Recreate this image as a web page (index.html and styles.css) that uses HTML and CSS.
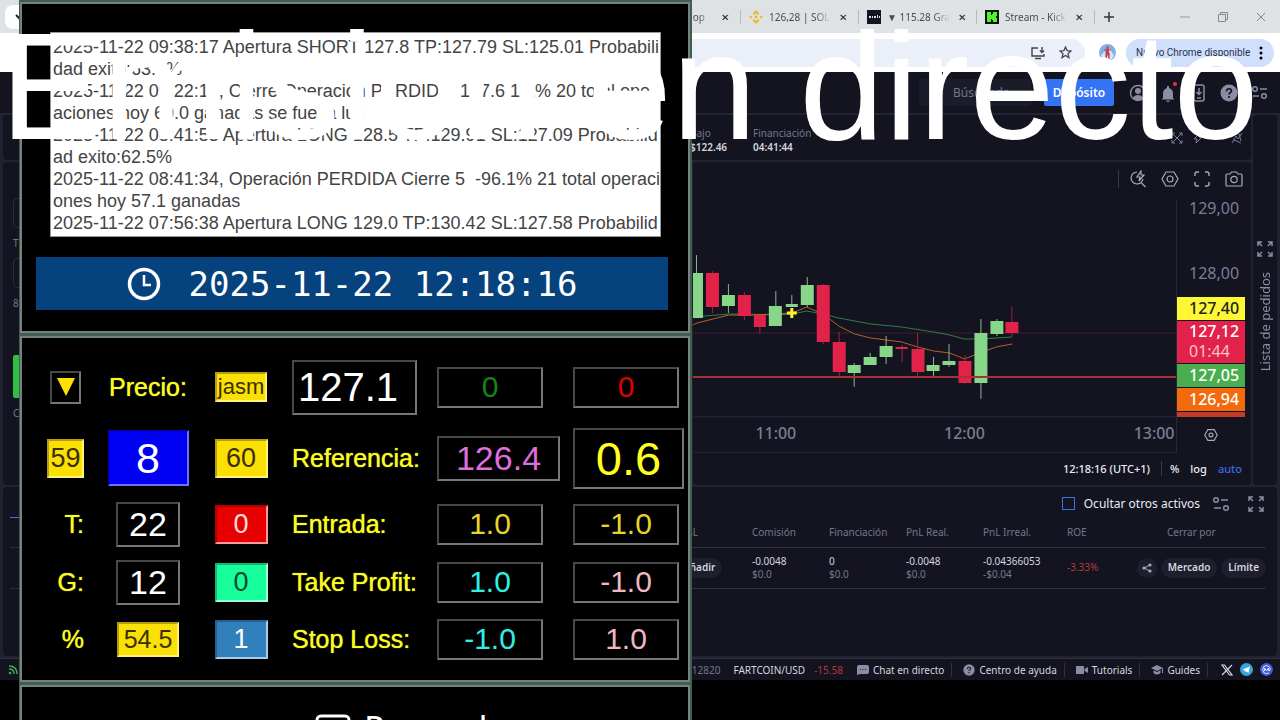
FILE: index.html
```
<!DOCTYPE html>
<html lang="es">
<head>
    <meta charset="UTF-8">
    <meta name="viewport" content="width=device-width, initial-scale=1.0">
    <title>Emision en directo</title>
    <link rel="stylesheet" href="styles.css">
</head>
<body>

    <!-- Navegador -->
    <div class="browser">
        <div class="tab-strip">
            <button class="tab-search" title="Buscar pestañas"><svg width="10" height="10" viewBox="0 0 10 10"><path d="M2 3l3 3 3-3" fill="none" stroke="#222" stroke-width="2"/></svg></button>
            <div class="tab">
                <span class="favicon"></span>
                <span class="tab-title tab-title-end">e op</span>
                <button class="tab-close">✕</button>
            </div>
            <div class="tab">
                <svg class="favicon" viewBox="0 0 14 14"><path d="M7 0l3.500 3.500-1.600 1.600L7 3.200 5.100 5.100 3.500 3.500zM0 7l1.700-1.700L3.400 7 1.700 8.700zM14 7l-1.700-1.700L10.600 7l1.700 1.700zM7 5.200L8.800 7 7 8.800 5.200 7zM7 14l-3.500-3.500 1.600-1.600L7 10.800l1.900-1.900 1.600 1.600z" fill="#f0b92b"/></svg>
                <span class="tab-title">126,28 | SOL</span>
                <button class="tab-close">✕</button>
            </div>
            <div class="tab">
                <svg class="favicon" viewBox="0 0 14 14"><path d="M0 0h14v14H0z" fill="#111626"/><path d="M2 6h2v2H2zM5 6h1v2H5zM7 6h2v2H7zM10 5h1v3h-1zM12 6h1v2h-1z" fill="#ddd"/></svg>
                <span class="tab-title">▼ 115.28 Gra</span>
                <button class="tab-close">✕</button>
            </div>
            <div class="tab">
                <svg class="favicon" viewBox="0 0 14 14"><path d="M0 0h14v14H0z" fill="#06140a"/><path d="M2 2h4v3h1V4h1V2h4v4h-1v2h1v4H8v-2H7V9H6v3H2z" fill="#4ff52a"/></svg>
                <span class="tab-title">Stream - Kick</span>
                <button class="tab-close">✕</button>
            </div>
            <div class="window-buttons">
                <button class="new-tab" title="Nueva pestaña"><svg width="10" height="10" viewBox="0 0 10 10"><path d="M5 0v10M0 5h10" stroke="#333" stroke-width="1.500"/></svg></button>
                <button title="Minimizar"><svg width="10" height="10" viewBox="0 0 10 10"><path d="M0 5h10" stroke="#999"/></svg></button>
                <button title="Restaurar"><svg width="10" height="10" viewBox="0 0 10 10"><path d="M.5 2.500h7v7h-7zM2.500 2.500V.500h7v7h-2" fill="none" stroke="#888"/></svg></button>
                <button title="Cerrar"><svg width="10" height="10" viewBox="0 0 10 10"><path d="M1 1l8 8M9 1L1 9" stroke="#888"/></svg></button>
            </div>
        </div>
        <div class="toolbar">
            <div class="omnibox">
                <svg width="14" height="14" viewBox="0 0 14 14"><path d="M7 2H1v8h12V8M4 12.500h6M11 1v5M9 4.500l2 2 2-2" fill="none" stroke="#444" stroke-width="1.400"/></svg>
                <svg width="13" height="13" viewBox="0 0 14 14"><path d="M7 1l1.700 4 4.300.400-3.300 2.800 1 4.300L7 10.200l-3.700 2.300 1-4.300L1 5.400 5.300 5z" fill="none" stroke="#444" stroke-width="1.400"/></svg>
            </div>
            <svg class="avatar" viewBox="0 0 16 16"><circle cx="8" cy="8" r="8" fill="#86aee6"/><path d="M2 11l3-4 2 2 3-5 4 7-2 3H4z" fill="#d9e6f8"/><path d="M7 2h2v3h2v1H9l1 3v5H9l-1-4-1 4H6V9l1-3H5V5h2z" fill="#c2404c"/></svg>
            <button class="update-pill">Nuevo Chrome disponible <svg width="4" height="14" viewBox="0 0 4 14"><circle cx="2" cy="2" r="1.500"/><circle cx="2" cy="7" r="1.500"/><circle cx="2" cy="12" r="1.500"/></svg></button>
        </div>

        <!-- Plataforma de trading -->
        <div class="app-header">
            <input class="search" type="text" placeholder="Búsqueda" aria-label="Búsqueda">
            <button class="deposit">Depósito</button>
            <div class="header-icons">
                <svg width="18" height="18" viewBox="0 0 18 18"><circle cx="9" cy="9" r="7.500" fill="none" stroke="#8a8da3" stroke-width="1.500"/><circle cx="9" cy="7" r="3" fill="#8a8da3"/><path d="M4 14c1-4 9-4 10 0-3 3-7 3-10 0z" fill="#8a8da3"/></svg>
                <svg width="18" height="22" viewBox="0 0 18 22"><path d="M7 4h2v2c3 1 4 3 4 6v4l1.500 1.500h-13L3 16v-4c0-3 1-5 4-6zM6 18.500h4l-2 2z" fill="#8a8da3"/><circle cx="15" cy="2" r="2" fill="#e5343c"/></svg>
                <svg width="16" height="18" viewBox="0 0 16 18"><rect x="3" y="1" width="10" height="16" rx="2" fill="none" stroke="#8a8da3" stroke-width="1.500"/><path d="M8 4v6M5.500 8L8 10.500 10.500 8M6 14h4" fill="none" stroke="#8a8da3" stroke-width="1.500"/></svg>
                <svg width="18" height="18" viewBox="0 0 18 18"><circle cx="9" cy="9" r="8.500" fill="#8a8da3"/><path d="M6.500 7.500c0-4 5-3 5-.500 0 1.500-2.500 1.500-2.500 3.500M9 12v2" fill="none" stroke="#131420" stroke-width="1.600"/></svg>
                <svg width="18" height="16" viewBox="0 0 18 16"><circle cx="4" cy="4" r="2.300" fill="none" stroke="#8a8da3" stroke-width="1.500"/><circle cx="13" cy="11" r="2.300" fill="none" stroke="#8a8da3" stroke-width="1.500"/><path d="M9 4h7M2 11h6" stroke="#8a8da3" stroke-width="1.500"/></svg>
            </div>
        </div>

        <div class="workspace">
            <div class="card market-info">
                <dl class="stat stat-low"><dt>Bajo</dt><dd>$122.46</dd></dl>
                <dl class="stat"><dt>Financiación</dt><dd>04:41:44</dd></dl>
                <div class="info-icons">
                    <svg width="12" height="12" viewBox="0 0 12 12"><path d="M1 4V1h3M8 1h3v3M11 8v3H8M4 11H1V8M1 1l10 10M11 1L1 11" fill="none" stroke="#7b7e92"/></svg>
                    <svg width="12" height="12" viewBox="0 0 12 12"><path d="M8 1L2 7h3l-1 4 6-6H7z" fill="none" stroke="#7b7e92"/></svg>
                    <svg class="pin" width="12" height="12" viewBox="0 0 12 12"><path d="M1 11l4-7 2 3 4-6M3 8l7 3M8 2l2 7" fill="none" stroke="#7b7e92"/></svg>
                </div>
            </div>

            <div class="card side-rail">
                <svg width="16" height="16" viewBox="0 0 16 16"><path d="M1 5V1h4M1 1l4 4M11 1h4v4M15 1l-4 4M15 11v4h-4M15 15l-4-4M5 15H1v-4M1 15l4-4" fill="none" stroke="#8a8da3" stroke-width="1.500"/></svg>
                <span>Lista de pedidos</span>
            </div>

            <div class="card order-form">
                <div class="order-field"></div>
                <span>T</span>
                <div class="order-field"></div>
                <span>8</span>
                <button class="buy" aria-label="Comprar"></button>
                <span>C</span>
            </div>

            <div class="card chart">
                <div class="chart-tools">
                    <svg class="replay" width="18" height="18" viewBox="0 0 18 18"><path d="M8 2a6 6 0 1 0 6 7M12.500 13l4 4M12 1L8 7h3l-1 4 5-6h-3z" fill="none" stroke="#a9abba" stroke-width="1.200"/></svg>
                    <svg width="18" height="18" viewBox="0 0 18 18"><path d="M5 2h8l4 7-4 7H5L1 9z" fill="none" stroke="#a9abba" stroke-width="1.200"/><circle cx="9" cy="9" r="3" fill="none" stroke="#a9abba" stroke-width="1.200"/></svg>
                    <svg width="18" height="18" viewBox="0 0 18 18"><path d="M2 6V4q0-2 2-2h2M12 2h2q2 0 2 2v2M16 12v2q0 2-2 2h-2M6 16H4q-2 0-2-2v-2" fill="none" stroke="#a9abba" stroke-width="1.400"/></svg>
                    <svg width="18" height="18" viewBox="0 0 18 18"><path d="M2 4h3l1.500-2h5L13 4h3q1 0 1 1v10q0 1-1 1H2q-1 0-1-1V5q0-1 1-1z" fill="none" stroke="#a9abba" stroke-width="1.200"/><circle cx="9" cy="9.500" r="3.200" fill="none" stroke="#a9abba" stroke-width="1.200"/></svg>
                </div>
                <div class="plot-row">
                    <svg class="plot" viewBox="0 0 485 258">
                        <path class="grid-line" d="M0 222h485M0 257.500h485M484.500 5v253"/>
                        <path class="last-price" d="M0 138h484"/>
                        <path class="ma-slow" d="M0 122l36-3h16l31 1 16-1 15-3 16 3 16 4 16 3 16 3 31 3 32 5 16 3 15 4h18l30-2"/>
                        <path class="ma-fast" d="M0 130l4-2 16-4 16-4h24l39-2 15-6 16 7 7 5 9 7 16 8 16 4 31 4 16 5 16 4 16 2 15 6 18-7 14-5 16-3"/>
                        <path class="wick up" d="M3.500 60v60M35.500 89v29M83 96v20M99 100v10M114.500 82v30M161.500 168v24M177.500 158v8M193.500 141v28M241 162v19M256.500 149v23M288.500 124v80M304.500 124v17"/>
                        <path class="wick down" d="M19.500 76v42M51.500 97v28M67 120v19M130.500 89v60M146.500 137v44M209.500 150v17M225 138v43M272.500 160v29M319.500 112v29"/>
                        <path class="body up" d="M-3 78h13v45h-13zM29 100h13v11h-13zM76 111h13v20h-13zM93 109h12v3h-12zM108 90h13v20h-13zM155 170h13v8h-13zM171 162h13v8h-13zM187 151h13v11h-13zM234 170h13v6h-13zM250 166h13v4h-13zM282 138h13v50h-13zM298 126h13v13h-13z"/>
                        <path class="body down" d="M13 78h13v34h-13zM45 100h13v21h-13zM61 120h12v12h-12zM124 90h13v57h-13zM140 147h13v30h-13zM203 152h12v2h-12zM219 154h13v23h-13zM266 166h13v22h-13zM313 127h13v11h-13z"/>
                        <path class="entry-line" d="M0 182h484"/>
                        <path class="marker" d="M99 113v10M94 118h10"/>
                        <text x="83" y="244">11:00</text>
                        <text x="272" y="244">12:00</text>
                        <text x="462" y="244">13:00</text>
                    </svg>
                    <div class="price-axis">
                        <div class="prices">
                            <span class="tick">129,00</span>
                            <span class="tick">128,00</span>
                            <span class="tag tag-yellow">127,40</span>
                            <span class="tag tag-red">127,12<br><small>01:44</small></span>
                            <span class="tag tag-green">127,05</span>
                            <span class="tag tag-orange">126,94</span>
                            <span class="tag tag-brick">126,49</span>
                        </div>
                        <svg width="14" height="14" viewBox="0 0 18 18"><path d="M5 2h8l4 7-4 7H5L1 9z" fill="none" stroke="#a9abba" stroke-width="1.500"/><circle cx="9" cy="9" r="2.500" fill="none" stroke="#a9abba" stroke-width="1.500"/></svg>
                    </div>
                </div>
                <div class="chart-footer">
                    <span>12:18:16 (UTC+1)</span>
                    <button class="percent">%</button>
                    <button>log</button>
                    <button class="auto">auto</button>
                </div>
            </div>

            <div class="card positions">
                <div class="positions-bar">
                    <button class="positions-tab" aria-label="Posiciones"></button>
                    <input type="checkbox" id="hide-assets">
                    <label for="hide-assets">Ocultar otros activos</label>
                    <svg width="18" height="16" viewBox="0 0 18 16"><circle cx="4" cy="4" r="2.300" fill="none" stroke="#8a8da3" stroke-width="1.500"/><circle cx="14" cy="12" r="2.300" fill="none" stroke="#8a8da3" stroke-width="1.500"/><path d="M9 4h7M2 12h7" stroke="#8a8da3" stroke-width="1.500"/></svg>
                    <svg width="16" height="16" viewBox="0 0 16 16"><path d="M1 5V1h4M1 1l4 4M11 1h4v4M15 1l-4 4M15 11v4h-4M15 15l-4-4M5 15H1v-4M1 15l4-4" fill="none" stroke="#8a8da3" stroke-width="1.500"/></svg>
                </div>
                <table>
                    <colgroup>
                        <col><col class="w-80"><col class="w-77"><col class="w-77"><col class="w-77"><col class="w-84"><col class="w-70"><col class="w-129">
                    </colgroup>
                    <thead>
                        <tr><th></th><th>TP/SL</th><th>Comisión</th><th>Financiación</th><th>PnL Real.</th><th>PnL Irreal.</th><th>ROE</th><th class="close-by">Cerrar por</th></tr>
                    </thead>
                    <tbody>
                        <tr>
                            <td></td>
                            <td class="targets"><button class="pill">Añadir</button></td>
                            <td>-0.0048<small>$0.0</small></td>
                            <td>0<small>$0.0</small></td>
                            <td>-0.0048<small>$0.0</small></td>
                            <td>-0.04366053<small>-$0.04</small></td>
                            <td class="loss">-3.33%</td>
                            <td>
                                <div class="close-actions">
                                    <button class="pill share" title="Compartir"><svg width="10" height="10" viewBox="0 0 10 10"><path d="M8 2L2 5l6 3" fill="none" stroke="#a9abba"/><circle cx="8" cy="2" r="1.600" fill="#a9abba"/><circle cx="2" cy="5" r="1.600" fill="#a9abba"/><circle cx="8" cy="8" r="1.600" fill="#a9abba"/></svg></button>
                                    <button class="pill">Mercado</button>
                                    <button class="pill">Límite</button>
                                </div>
                            </td>
                        </tr>
                    </tbody>
                </table>
            </div>
        </div>

        <div class="app-footer">
            <svg class="signal" width="10" height="10" viewBox="0 0 10 10"><path d="M1 1q8 0 8 8M1 4q5 0 5 5" fill="none" stroke="#3fae4a" stroke-width="1.500"/><circle cx="2" cy="8" r="1.300" fill="#3fae4a"/></svg>
            <span class="ticker-price">.12820</span>
            <span class="ticker-name">FARTCOIN/USD</span>
            <span class="ticker-change">-15.58</span>
            <a href="#"><svg width="12" height="10" viewBox="0 0 12 10"><path d="M2 0h8q2 0 2 2v5q0 2-2 2H3l-3 1V2q0-2 2-2z" fill="#8a8da3"/><path d="M3 4h1v1H3zM5.500 4h1v1h-1zM8 4h1v1H8z" fill="#131420"/></svg>Chat en directo</a>
            <a href="#"><svg width="12" height="12" viewBox="0 0 18 18"><circle cx="9" cy="9" r="8.500" fill="#8a8da3"/><path d="M6.500 7.500c0-4 5-3 5-.500 0 1.500-2.500 1.500-2.500 3.500M9 12v2" fill="none" stroke="#131420" stroke-width="1.600"/></svg>Centro de ayuda</a>
            <a href="#"><svg width="12" height="10" viewBox="0 0 12 10"><path d="M0 1h8v8H0zM8.500 4L12 2v6L8.500 6z" fill="#8a8da3"/></svg>Tutorials</a>
            <a href="#"><svg width="12" height="10" viewBox="0 0 12 10"><path d="M6 0l6 3-6 3-6-3zM2.500 5.200L6 7l3.500-1.800V8Q6 11 2.500 8zM11 3.500h1V8h-1z" fill="#8a8da3"/></svg>Guides</a>
            <div class="social">
                <a href="#" title="X"><svg width="12" height="12" viewBox="0 0 12 12"><path d="M1 1h2.500l7.500 10H8.500zM11 1L1 11" fill="none" stroke="#d5d6df" stroke-width="1.200"/></svg></a>
                <a href="#" title="Telegram"><svg width="13" height="13" viewBox="0 0 13 13"><circle cx="6.500" cy="6.500" r="6.500" fill="#35a5dc"/><path d="M2.500 6.500L10 3.500 8.500 10 5.800 8l-.800 1.500-.500-2.300z" fill="#fff"/></svg></a>
                <a href="#" title="CoinMarketCap"><svg width="13" height="13" viewBox="0 0 13 13"><circle cx="6.500" cy="6.500" r="6.500" fill="#4358d8"/><path d="M9 10Q6 11.500 3.700 9.500 1.500 6 4 3.300 7 1.500 9.500 4q1 2 .500 3.500-1.200 1-1.500-.500V5L6.500 8 4.500 5v3" fill="none" stroke="#dfe4ff"/></svg></a>
            </div>
        </div>
    </div>

    <!-- Ventana del bot, por encima del navegador -->
    <div class="bot">
        <div class="frame frame-log">
            <textarea class="log" readonly wrap="off" aria-label="Registro de operaciones">2025-11-22 09:38:17 Apertura SHORT 127.8 TP:127.79 SL:125.01 Probabili
dad exito:63.6%
2025-11-22 09:22:17, Cierre Operación PERDIDA  127.6 1.1% 20 total oper
aciones hoy 60.0 ganadas se fue la luz
2025-11-22 08:41:53 Apertura LONG 128.5 TP:129.91 SL:127.09 Probabilid
ad exito:62.5%
2025-11-22 08:41:34, Operación PERDIDA Cierre 5  -96.1% 21 total operaci
ones hoy 57.1 ganadas
2025-11-22 07:56:38 Apertura LONG 129.0 TP:130.42 SL:127.58 Probabilid</textarea>
            <div class="clock">
                <svg width="34" height="34" viewBox="0 0 34 34"><circle cx="17" cy="17" r="14.500" fill="none" stroke="#fff" stroke-width="3.500"/><path d="M17 8v10h7" fill="none" stroke="#fff" stroke-width="2.500"/></svg>
                <time>2025-11-22 12:18:16</time>
            </div>
        </div>

        <div class="frame controls">
            <button class="box arrow" title="Bajista"><svg width="18" height="18" viewBox="0 0 18 18"><path d="M0 0h18L9 18z" fill="#ffe000"/></svg></button>
            <label for="price">Precio:</label>
            <input class="box gold user" type="text" value="jasm" aria-label="Usuario">
            <div class="cell"><input class="box price" id="price" type="text" value="127.1"></div>
            <input class="box value green" type="text" value="0" aria-label="Compras">
            <input class="box value red" type="text" value="0" aria-label="Ventas">

            <input class="box gold sec" type="text" value="59" aria-label="Segundos">
            <input class="box blue" type="text" value="8" aria-label="Operación">
            <input class="box gold small" type="text" value="60" aria-label="Intervalo">
            <label class="cell" for="reference">Referencia:</label>
            <input class="box reference" id="reference" type="text" value="126.4">
            <input class="box diff" type="text" value="0.6" aria-label="Diferencia">

            <label for="total">T:</label>
            <input class="box count" id="total" type="text" value="22">
            <input class="box small bg-red" type="text" value="0" aria-label="Perdidas seguidas">
            <label class="cell" for="entry">Entrada:</label>
            <input class="box value amber" id="entry" type="text" value="1.0">
            <input class="box value amber" type="text" value="-1.0" aria-label="Entrada corta">

            <label for="won">G:</label>
            <input class="box count" id="won" type="text" value="12">
            <input class="box small bg-mint" type="text" value="0" aria-label="Ganadas seguidas">
            <label class="cell" for="take-profit">Take Profit:</label>
            <input class="box value cyan" id="take-profit" type="text" value="1.0">
            <input class="box value pink" type="text" value="-1.0" aria-label="Take Profit corto">

            <label for="percent">%</label>
            <input class="box gold ratio" id="percent" type="text" value="54.5">
            <input class="box small bg-steel" type="text" value="1" aria-label="Activo">
            <label class="cell" for="stop-loss">Stop Loss:</label>
            <input class="box value cyan" id="stop-loss" type="text" value="-1.0">
            <input class="box value pink" type="text" value="1.0" aria-label="Stop Loss corto">
        </div>

        <div class="frame frame-next">
            <svg width="36" height="30" viewBox="0 0 36 30"><rect x="2" y="2" width="32" height="26" rx="4" fill="none" stroke="#fff" stroke-width="3"/></svg>
            <span>Record</span>
        </div>
    </div>

    <!-- Rótulo de la emisión -->
    <div class="live-title">Emision en directo</div>

</body>
</html>
```
FILE: styles.css
```
* {
    box-sizing: border-box;
}

body {
    margin: 0;
    height: 100vh;
    overflow: hidden; /* sin barras de desplazamiento */
    position: relative;
    background-color: #000;
    color: #d5d6df;
    font-family: "Noto Sans", "Open Sans", sans-serif;
    font-size: 11px;
}

button {
    padding: 0;
    border: none;
    background: none;
    color: inherit;
    font: inherit;
    cursor: pointer;
}

svg {
    flex-shrink: 0;
}

/* Pestañas */
.tab-strip {
    display: flex;
    justify-content: flex-end;
    align-items: center;
    height: 33px;
    background-color: #dee2e5;
    color: #4a4c50;
    font-size: 10px;
}

.tab-search {
    display: flex;
    justify-content: center;
    align-items: center;
    width: 28px;
    height: 24px;
    margin: 0 auto 0 5px;
    border-radius: 8px;
    background-color: #fff;
}

.tab {
    display: flex;
    align-items: center;
    gap: 6px;
    width: 118px;
    height: 14px;
    padding: 0 9px 0 8px;
    border-right: 1px solid #b5b8bc;
}

.favicon {
    flex-shrink: 0;
    width: 14px;
    height: 14px;
}

.tab-title {
    flex: 1;
    white-space: nowrap;
    -webkit-mask-image: linear-gradient(to right, #000 75%, transparent);
    mask-image: linear-gradient(to right, #000 75%, transparent);
}

.tab-title-end {
    text-align: right;
    padding-right: 8px;
}

.tab-close {
    width: 12px;
    color: #222;
}

.window-buttons {
    display: flex;
    align-items: center;
    gap: 28px;
    width: 185px;
    padding: 0 14px 0 9px;
}

.window-buttons button {
    display: flex;
}

.window-buttons .new-tab {
    margin-right: auto;
}

.toolbar {
    display: flex;
    align-items: center;
    justify-content: flex-end;
    height: 39px;
    padding: 0 6px;
    background-color: #fff;
}

.omnibox {
    display: flex;
    justify-content: flex-end;
    align-items: center;
    gap: 14px;
    flex: 1;
    height: 28px;
    margin-left: 80px;
    padding-right: 13px;
    border-radius: 14px;
    background-color: #ebeffa;
}

.avatar {
    width: 17px;
    height: 17px;
    margin: 0 10px 0 14px;
}

.update-pill {
    display: flex;
    justify-content: space-between;
    align-items: center;
    width: 148px;
    height: 28px;
    padding: 0 11px 0 10px;
    border-radius: 14px;
    background-color: #d0dffb;
    color: #26324c;
    font-family: Roboto, sans-serif;
    font-size: 10px;
}

/* Cabecera de la plataforma */
.app-header {
    display: flex;
    justify-content: flex-end;
    align-items: center;
    gap: 13px;
    height: 43px;
    padding-right: 11px;
    border-bottom: 2px solid #232534;
    background-color: #131420;
}

.search {
    width: 112px;
    height: 27px;
    padding: 0 0 0 34px;
    border: none;
    border-radius: 3px;
    background-color: #1a1c29;
    font: inherit;
    font-size: 12px;
}

.search::placeholder {
    color: #74778c;
}

.deposit {
    width: 70px;
    height: 27px;
    border-radius: 2px;
    background-color: #3573f5;
    color: #fff;
    font-size: 12px;
    font-weight: 600;
}

.header-icons {
    display: flex;
    align-items: center;
    gap: 13px;
    margin-left: 2px;
}

/* Rejilla de tarjetas */
.workspace {
    display: grid;
    grid-template-columns: 54% 1fr 24px;
    grid-template-rows: 45px 323px 169px;
    gap: 2px;
    padding: 0 3px 2px;
    background-color: #20222f;
}

.card {
    border-radius: 4px;
    background-color: #131420;
    overflow: hidden;
}

.market-info {
    grid-column: 1 / 3;
    display: flex;
    justify-content: flex-end;
    padding: 11px 6px 0 0;
}

.stat {
    width: 210px;
    margin: 0;
    font-size: 10px;
    line-height: 14px;
}

.stat-low {
    width: 63px;
}

.stat dt {
    color: #74778c;
}

.stat dd {
    margin: 0;
    font-weight: 600;
}

.info-icons {
    display: flex;
    gap: 9px;
    width: 282px;
    padding: 6px 2px 0 0;
    justify-content: flex-end;
}

.pin {
    margin-left: 18px;
}

.side-rail {
    grid-column: 3;
    grid-row: 1 / 3;
    display: flex;
    flex-direction: column;
    align-items: center;
    gap: 15px;
    padding-top: 126px;
    color: #8a8da3;
    font-size: 13px;
}

.side-rail span {
    writing-mode: vertical-rl;
    transform: rotate(180deg);
}

.order-form {
    grid-column: 1;
    display: flex;
    flex-direction: column;
    padding: 36px 10px 0;
    color: #74778c;
    font-size: 10px;
    line-height: 14px;
}

.order-form span {
    padding: 8px 0;
}

.order-field {
    flex-shrink: 0;
    height: 30px;
    border: 1px solid #2b2d3b;
    border-radius: 4px;
}

.buy {
    flex-shrink: 0;
    height: 43px;
    margin-top: 37px;
    border-radius: 2px;
    background-color: #2fbf45;
}

/* Gráfico */
.chart {
    grid-column: 2;
    display: flex;
    flex-direction: column;
}

.chart-tools {
    display: flex;
    justify-content: flex-end;
    align-items: center;
    gap: 14px;
    height: 33px;
    padding-right: 8px;
}

.replay {
    width: 29px;
    padding-left: 10px;
    border-left: 1px solid #383a49;
}

.plot-row {
    display: flex;
    height: 258px;
}

.plot {
    flex: 1;
    min-width: 0;
    height: 258px;
    font-size: 16px;
    font-weight: 500;
    text-anchor: middle;
    fill: #7b7e92;
}

.plot path {
    fill: none;
}

.plot .grid-line {
    stroke: #272937;
}

.plot .last-price {
    stroke: #6b2540;
    stroke-dasharray: 1 1;
}

.plot .entry-line {
    stroke: #a43236;
    stroke-width: 2;
}

.plot .ma-slow {
    stroke: #347a48;
}

.plot .ma-fast {
    stroke: #b4612a;
}

.plot .wick.up {
    stroke: #8fb594;
}

.plot .wick.down {
    stroke: #a32042;
}

.plot .body.up {
    fill: #88d68a;
}

.plot .body.down {
    fill: #e32249;
}

.plot .marker {
    stroke: #ffee3a;
    stroke-width: 3;
}

.price-axis {
    display: flex;
    flex-direction: column;
    align-items: center;
    width: 74px;
    padding-right: 6px;
}

.prices {
    display: flex;
    flex-direction: column;
    gap: 1px;
    width: 100%;
    height: 222px;
    margin-bottom: 11px;
    padding-top: 2px;
    overflow: hidden;
    font-size: 16px;
    line-height: 22px;
}

.tick {
    flex-shrink: 0;
    height: 64px;
    padding-left: 12px;
    color: #7b7e92;
}

.tick + .tick {
    height: 34px;
}

.tag {
    flex-shrink: 0;
    height: 23px;
    padding-left: 12px;
    color: #fff;
    font-weight: 500;
}

.tag small {
    font-size: 16px;
    font-weight: 400;
    color: #f9c3cf;
}

.tag-yellow {
    background-color: #fdf735;
    color: #222;
}

.tag-red {
    height: 42px;
    background-color: #e32249;
    line-height: 20px;
}

.tag-green {
    background-color: #4aae4e;
}

.tag-orange {
    background-color: #f26a0c;
}

.tag-brick {
    background-color: #c43a2b;
}

.chart-footer {
    display: flex;
    justify-content: flex-end;
    align-items: center;
    gap: 11px;
    height: 30px;
    padding-right: 9px;
    color: #ebecf2;
    font-size: 11px;
    font-weight: 500;
}

.percent {
    padding-left: 8px;
    border-left: 1px solid #383a49;
}

.auto {
    color: #3a66e8;
}

/* Posiciones */
.positions {
    grid-column: 1 / 4;
    padding: 2px 11px 0 7px;
}

.positions-bar {
    display: flex;
    justify-content: flex-end;
    align-items: center;
    height: 29px;
    color: #ebecf2;
    font-size: 12px;
}

.positions-tab {
    width: 80px;
    height: 29px;
    margin-right: auto;
    border-bottom: 1px solid #3a72e8;
}

.positions-bar input {
    appearance: none;
    width: 13px;
    height: 13px;
    margin: 0;
    border: 1px solid #3a72e8;
}

.positions-bar label {
    margin: 0 12px 0 9px;
}

.positions-bar svg + svg {
    margin: 0 2px 0 18px;
}

table {
    width: 100%;
    table-layout: fixed;
    border-collapse: collapse;
    font-size: 10px;
    line-height: 13px;
    white-space: nowrap;
}

.w-70 {
    width: 70px;
}

.w-77 {
    width: 77px;
}

.w-80 {
    width: 80px;
}

.w-84 {
    width: 84px;
}

.w-129 {
    width: 129px;
}

th {
    height: 29px;
    padding: 0;
    border-bottom: 1px solid #2d303d;
    color: #74778c;
    font-weight: 400;
    text-align: left;
}

.close-by {
    padding-left: 30px;
}

td {
    height: 41px;
    padding: 0;
    border-bottom: 1px solid #2d303d;
}

td small {
    display: block;
    font-size: 10px;
    color: #74778c;
}

.targets {
    padding-left: 4px;
}

.loss {
    color: #b23a3a;
}

.close-actions {
    display: flex;
    justify-content: flex-end;
    gap: 4px;
}

.pill {
    height: 20px;
    padding: 0 7px;
    border-radius: 10px;
    background-color: #1d1f2c;
    font-weight: 600;
}

.share {
    display: flex;
    align-items: center;
    padding: 0 5px;
}

/* Pie */
.app-footer {
    display: flex;
    align-items: center;
    height: 22px;
    padding: 0 7px 0 8px;
    border-top: 1px solid #2f3140;
    background-color: #131420;
    font-size: 10px;
}

.signal {
    margin-right: auto;
}

.ticker-price {
    margin-right: 13px;
    color: #74778c;
}

.ticker-name {
    margin-right: 9px;
}

.ticker-change {
    margin-right: 3px;
    color: #b23a3a;
}

.app-footer a {
    display: flex;
    align-items: center;
    gap: 4px;
    color: inherit;
    text-decoration: none;
}

.app-footer > a {
    padding: 0 7px 0 11px;
    border-right: 1px solid #2f3140;
}

.social {
    display: flex;
    gap: 7px;
    margin-left: 13px;
}

/* Ventana del bot */
.bot {
    position: absolute;
    top: 0;
    left: 19px;
    width: 673px;
    height: 100%;
    display: flex;
    flex-direction: column;
    gap: 3px;
    padding: 2px 2px 0 1px;
    overflow: hidden;
    background-color: #425d53;
    font-family: "Liberation Sans", Arial, sans-serif;
}

.frame {
    flex-shrink: 0;
    border: 2px solid #75837d;
    background-color: #000;
}

.frame-log {
    height: 331px;
    padding: 28px 20px 0 14px;
}

.log {
    display: block;
    width: calc(100% - 21px);
    height: 205px;
    margin: 0 0 20px 14px;
    padding: 3px 0 0 2px;
    border: 1px solid #999;
    background-color: #fff;
    color: #444;
    font-family: inherit;
    font-size: 18px;
    line-height: 22px;
    resize: none;
    overflow: hidden;
}

.clock {
    display: flex;
    justify-content: center;
    align-items: center;
    gap: 28px;
    height: 53px;
    background-color: #06427d;
    color: #fff;
    font-family: "DejaVu Sans Mono", monospace;
    font-size: 34px;
}

.controls {
    display: grid;
    grid-template-columns: 60fr 128fr 58fr 167fr 136fr 115fr;
    grid-template-rows: 70px 72px 60px 56px 58px;
    align-items: center;
    justify-items: center;
    height: 346px;
    padding: 14px 0 0 2px;
    color: #f8fc20;
    font-size: 25px;
}

.controls label {
    text-shadow: 0 0 1px #f8fc20;
}

.controls > :nth-child(6n + 1) {
    justify-self: end;
}

.controls > :nth-child(6n + 4) {
    justify-self: start;
    padding-left: 22px;
}

.controls > :nth-child(6n + 5),
.controls > :nth-child(6n) {
    justify-self: start;
}

.box {
    padding: 0;
    border: 2px solid;
    border-color: #484848 #777 #777 #484848;
    background-color: #000;
    color: #fff;
    font-family: inherit;
    text-align: center;
}

.arrow {
    display: flex;
    justify-content: center;
    align-items: center;
    width: 31px;
    height: 33px;
    margin-right: 3px;
}

.gold {
    border-color: #b79d10 #fff27a #fff27a #b79d10;
    background-color: #fbe003;
    color: #3a3000;
    font-size: 27px;
}

.user {
    width: 52px;
    height: 30px;
    font-size: 22px;
}

.sec {
    width: 37px;
    height: 39px;
}

.small {
    width: 53px;
    height: 39px;
    font-size: 27px;
}

.ratio {
    width: 62px;
    height: 35px;
    font-size: 25px;
}

.blue {
    width: 81px;
    height: 56px;
    border-color: #0000c0 #7070ff #7070ff #0000c0;
    background-color: #0000f5;
    font-size: 43px;
}

.count {
    width: 64px;
    height: 45px;
    font-size: 34px;
}

.price {
    width: 125px;
    height: 55px;
    padding-left: 4px;
    font-size: 40px;
    text-align: left;
}

.value {
    width: 106px;
    height: 41px;
    font-size: 30px;
}

.reference {
    width: 123px;
    height: 45px;
    color: #dc6fdc;
    font-size: 34px;
}

.diff {
    width: 111px;
    height: 61px;
    color: #ffff20;
    font-size: 47px;
}

.green {
    color: #138613;
}

.red {
    color: #e00000;
}

.amber {
    color: #e8d22c;
}

.cyan {
    color: #2ef0e4;
}

.pink {
    color: #f0b6c4;
}

.bg-red {
    border-color: #b00000 #ff9a9a #ff9a9a #b00000;
    background-color: #e80000;
    color: #ffdcdc;
}

.bg-mint {
    border-color: #12b870 #a0ffd4 #a0ffd4 #12b870;
    background-color: #17ff9a;
    color: #0b4a2c;
}

.bg-steel {
    border-color: #265f8e #a8cdea #a8cdea #265f8e;
    background-color: #3180bb;
}

.frame-next {
    display: flex;
    justify-content: center;
    gap: 14px;
    height: 80px;
    padding: 27px 0 0 94px;
    color: #fff;
    font-family: "DejaVu Sans Mono", monospace;
    font-size: 34px;
    line-height: 30px;
}

.frame-next {
    justify-content: flex-start;
    padding-left: 293px;
}

/* Rótulo superpuesto */
.live-title {
    position: absolute;
    top: 9px;
    left: 0;
    color: #fff;
    font-family: "Liberation Sans", Arial, sans-serif;
    font-size: 153px;
    line-height: 153px;
    white-space: nowrap;
    pointer-events: none;
}
```
